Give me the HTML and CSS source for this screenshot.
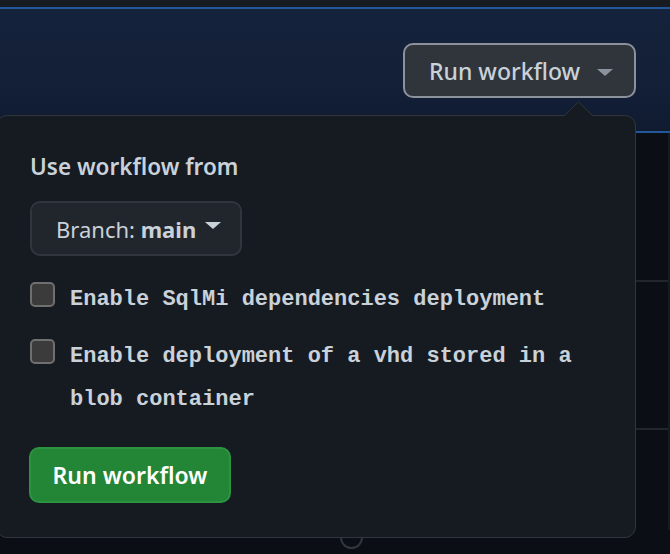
FILE: index.html
```html
<!DOCTYPE html>
<html>
<head>
<meta charset="utf-8">
<link rel="stylesheet" href="styles.css">
</head>
<body>
<div class="topbar"></div>
<div class="banner">
  <button class="btn-run">Run workflow <span class="caret caret-muted"></span></button>
</div>
<div class="runs">
  <div class="run-row"></div>
  <div class="run-row"></div>
  <div class="run-row last"></div>
</div>
<div class="spinner-row"><span class="spinner"></span></div>

<div class="popover">
  <svg class="pointer" width="31" height="16" viewBox="0 0 31 16">
    <polygon points="0.5,15.5 15.5,0.8 30.5,15.5" fill="#161b22" stroke="#30363d" stroke-width="1"/>
    <rect x="0" y="15" width="31" height="2" fill="#161b22"/>
  </svg>
  <div class="title">Use workflow from</div>
  <button class="btn-branch"><span>Branch: <strong>main</strong></span><span class="caret caret-light"></span></button>
  <label class="check-row first">
    <span class="box"></span>
    <span class="label">Enable SqlMi dependencies deployment</span>
  </label>
  <label class="check-row">
    <span class="box"></span>
    <span class="label">Enable deployment of a vhd stored in a blob container</span>
  </label>
  <button class="btn-green">Run workflow</button>
</div>
</body>
</html>
```

FILE: styles.css
```css
* { box-sizing: border-box; }
html, body { margin: 0; padding: 0; }
body {
  width: 670px;
  height: 554px;
  overflow: hidden;
  position: relative;
  background: #0b0f15;
  font-family: "Noto Sans", "Open Sans", sans-serif;
  color: #c9d1d9;
}
.topbar { height: 7px; background: #161b22; }
.banner {
  height: 126px;
  border-top: 2px solid #24569a;
  border-bottom: 2px solid #24569a;
  background: linear-gradient(180deg, #15223b 0%, #132038 60%, #101b30 100%);
  display: flex;
  justify-content: flex-end;
  align-items: flex-start;
  padding: 34px 34px 0 0;
}
button { font-family: inherit; cursor: pointer; }
.btn-run {
  height: 55px;
  width: 233px;
  display: flex;
  align-items: center;
  padding: 0 0 0 24px;
  background: #30353c;
  border: 2px solid #8b929b;
  border-radius: 10px;
  color: #c9d1d9;
  font-size: 23px;
  font-weight: 500;
  white-space: pre;
}
.caret {
  display: inline-block;
  width: 0; height: 0;
  border-left: 8px solid transparent;
  border-right: 8px solid transparent;
  border-top: 7px solid #8b949e;
}
.btn-run .caret { margin-left: 11px; margin-top: 3px; }
.caret-light { border-top-color: #c9d1d9; }
.runs { border-right: 2px solid #161b22; width: 670px; }
.run-row { height: 148px; border-bottom: 2px solid #21262d; }
.run-row:first-child { height: 149px; }
.run-row.last { height: 100px; border-bottom: none; }
.spinner-row { position: relative; }
.spinner {
  position: absolute;
  left: 340px;
  top: -4px;
  width: 23px; height: 23px;
  border: 2px solid #30363d;
  border-radius: 50%;
}

.popover {
  position: absolute;
  left: -4px;
  top: 115px;
  width: 640px;
  height: 423px;
  background: #161b22;
  border: 1px solid #30363d;
  border-radius: 11px;
  padding: 35px 30px 0 33px;
}
.pointer {
  position: absolute;
  left: 566px;
  top: -15px;
}
.title {
  font-size: 22.5px;
  font-weight: 600;
  line-height: 32px;
  color: #c9d1d9;
}
.btn-branch {
  margin-top: 18px;
  height: 55px;
  width: 212px;
  display: flex;
  align-items: center;
  padding: 0 0 0 24px;
  background: #21262d;
  border: 2px solid #30363d;
  border-radius: 10px;
  color: #c9d1d9;
  font-size: 22px;
  font-weight: 400;
  white-space: pre;
}
.btn-branch strong { font-weight: 700; }
.btn-branch .caret { margin-left: 9px; margin-top: -6px; }
.check-row {
  display: flex;
  align-items: flex-start;
  gap: 15px;
  margin-top: 14px;
}
.check-row.first { margin-top: 22px; }
.box {
  flex: none;
  width: 25px;
  height: 25px;
  margin-top: 4px;
  background: #3b3b3b;
  border: 2px solid #6f6f6f;
  border-radius: 5px;
}
.label {
  font-family: "Liberation Mono", "DejaVu Sans Mono", monospace;
  font-weight: 700;
  font-size: 22px;
  line-height: 43px;
  color: #c9d1d9;
}
.btn-green {
  margin-top: 26px;
  height: 56px;
  width: 202px;
  margin-left: -1px;
  display: flex;
  align-items: center;
  justify-content: center;
  background: #238636;
  border: 2px solid #2c9341;
  border-radius: 10px;
  color: #ffffff;
  font-size: 23px;
  font-weight: 600;
}
```
